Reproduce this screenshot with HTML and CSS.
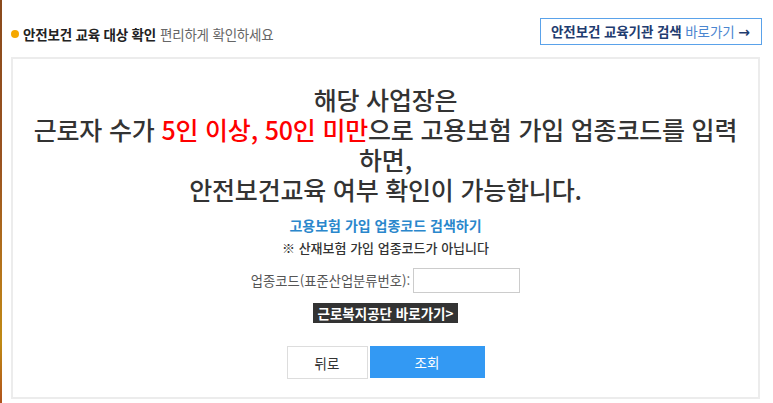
FILE: index.html
```html
<!DOCTYPE html>
<html lang="ko">
<head>
<meta charset="utf-8">
<title>안전보건 교육 대상 확인</title>
<link rel="stylesheet" href="styles.css">
</head>
<body>
<div class="edge"></div>
<div class="page">
  <header class="top">
    <h1 class="title"><span class="dot"></span><strong>안전보건 교육 대상 확인</strong> <span class="sub">편리하게 확인하세요</span></h1>
    <a class="org-link" href="#"><strong>안전보건 교육기관 검색</strong> <span class="go">바로가기</span> <b class="arrow">→</b></a>
  </header>
  <main class="box">
    <p class="lead">해당 사업장은<br>근로자 수가 <span class="red">5인 이상, 50인 미만</span>으로 고용보험 가입 업종코드를 입력 하면,<br>안전보건교육 여부 확인이 가능합니다.</p>
    <a class="search" href="#">고용보험 가입 업종코드 검색하기</a>
    <p class="note">※ 산재보험 가입 업종코드가 아닙니다</p>
    <div class="field">
      <label for="code">업종코드(표준산업분류번호):</label>
      <input id="code" type="text">
    </div>
    <a class="kcomwel" href="#">근로복지공단 바로가기&gt;</a>
    <div class="actions">
      <button class="btn back" type="button">뒤로</button>
      <button class="btn query" type="button">조회</button>
    </div>
  </main>
</div>
</body>
</html>
```
FILE: styles.css
```css
html, body {
  margin: 0;
  padding: 0;
  background: #fff;
  height: 100%;
}
body {
  display: flex;
  font-family: "Noto Sans CJK KR", "Noto Sans", sans-serif;
  color: #333;
  overflow: hidden;
}
.edge {
  width: 2px;
  flex: none;
  background: linear-gradient(#8a4a1c 0%, #9a5320 40%, #b8781a 70%, #c08a14 85%, #b0521c 100%);
}
.page {
  flex: 1;
  padding: 17px 11px 0 9px;
}
.top {
  display: flex;
  justify-content: space-between;
  align-items: center;
  height: 28px;
}
.title {
  margin: 5px 0 0;
  font-size: 13.5px;
  font-weight: 400;
  display: flex;
  align-items: center;
  color: #222;
  letter-spacing: -0.2px;
}
.title strong {
  font-weight: 700;
  margin-right: 4px;
}
.dot {
  width: 8px;
  height: 8px;
  border-radius: 50%;
  background: #f5a800;
  margin-right: 4px;
}
.sub {
  color: #666;
}
.org-link {
  display: block;
  box-sizing: border-box;
  width: 222px;
  height: 27px;
  line-height: 25px;
  border: 1px solid #5aa2ea;
  padding-left: 10px;
  font-size: 13.5px;
  text-decoration: none;
  color: #1f3c70;
  letter-spacing: -0.1px;
  white-space: nowrap;
}
.org-link strong {
  font-weight: 700;
}
.go {
  color: #4b86d0;
}
.arrow {
  font-weight: 700;
  font-family: "DejaVu Sans", sans-serif;
  font-size: 14px;
}
.box {
  margin-top: 12px;
  box-sizing: border-box;
  width: 749px;
  height: 342px;
  border: 2px solid #ececec;
  display: flex;
  flex-direction: column;
  align-items: center;
  padding: 25px 12px 0;
  text-align: center;
}
.lead {
  margin: 0;
  font-size: 25px;
  line-height: 30px;
  font-weight: 500;
  color: #333;
  letter-spacing: -0.2px;
}
.red {
  color: #f00;
}
.search {
  margin-top: 11px;
  font-size: 14px;
  line-height: 20px;
  font-weight: 700;
  color: #2a87cc;
  text-decoration: none;
}
.note {
  margin: 3px 0 0;
  font-size: 13px;
  line-height: 20px;
  color: #333;
  font-weight: 500;
}
.field {
  margin-top: 10px;
  display: flex;
  align-items: center;
  gap: 3px;
  font-size: 13.3px;
  color: #555;
}
.field input {
  box-sizing: border-box;
  width: 107px;
  height: 25px;
  border: 1px solid #ccc;
  margin: 0;
  padding: 0 4px;
}
.kcomwel {
  margin-top: 10px;
  display: block;
  height: 20px;
  line-height: 20px;
  padding: 0 5px;
  background: #333;
  color: #fff;
  font-size: 13.5px;
  font-weight: 700;
  text-decoration: none;
}
.actions {
  margin-top: 23px;
  display: flex;
  gap: 2px;
  align-items: flex-start;
}
.btn {
  box-sizing: border-box;
  font-family: inherit;
  font-size: 13.5px;
  margin: 0;
  cursor: pointer;
}
.back {
  width: 81px;
  height: 33px;
  background: #fff;
  border: 1px solid #ddd;
  color: #333;
}
.query {
  width: 115px;
  height: 32px;
  background: #3399f3;
  border: 1px solid #3399f3;
  color: #fff;
}
```
